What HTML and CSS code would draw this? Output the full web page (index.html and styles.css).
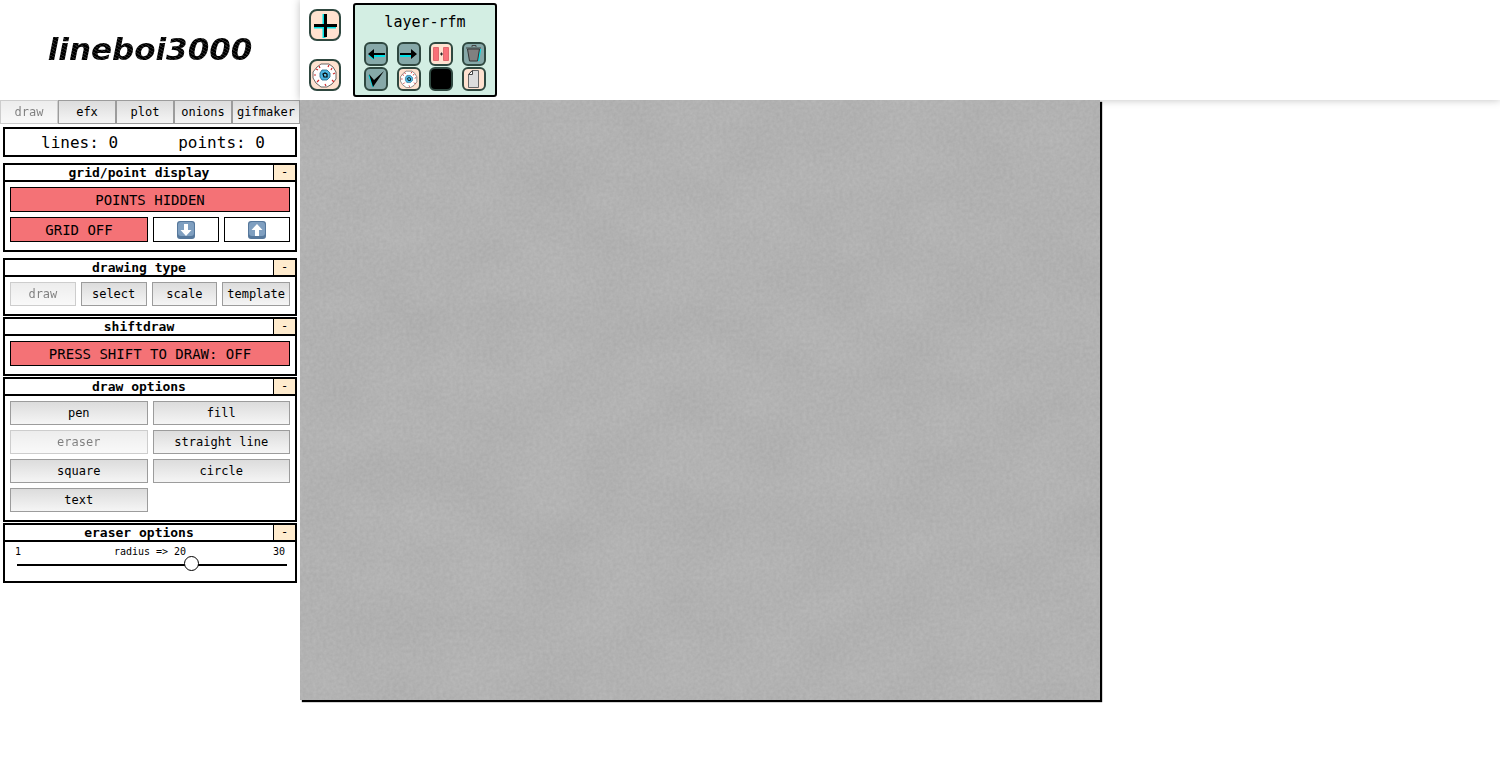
FILE: index.html
```html
<!DOCTYPE html>
<html lang="en">
<head>
<meta charset="utf-8">
<title>lineboi3000</title>
<link rel="stylesheet" href="styles.css">
</head>
<body>
<svg class="defs" aria-hidden="true">
  <symbol id="eye" viewBox="2 2 28 28">
    <path d="M12 5h8l4 3 3 5v7l-4 5-5 3h-6l-5-4-3-5v-6l4-5z" fill="#fff" stroke="#444" stroke-width=".8"/>
    <path d="M10 7l1 2M20 6l-1 2M26 14l-2 1M25 23l-2-2M17 27l-1-2M8 23l2-2M5 16h2M7 10l2 1M23 9l-1 2" fill="none" stroke="#d02a2a" stroke-width="1.2"/>
    <path d="M13 11h5l3 3v4l-3 3h-5l-2-3v-4z" fill="#4cb4e0" stroke="#1b6080" stroke-width=".8"/>
    <path d="M14 15l2-1 2 1v3h-3z" fill="#58c8f0" stroke="#000" stroke-width="1.2"/>
  </symbol>
</svg>
<div class="app">
  <aside class="sidebar">
    <h1 class="logo"><span>lineboi3000</span></h1>
    <nav class="tabs">
      <button class="btn" disabled>draw</button>
      <button class="btn">efx</button>
      <button class="btn">plot</button>
      <button class="btn">onions</button>
      <button class="btn">gifmaker</button>
    </nav>
    <div class="stats"><span>lines: 0</span><span>points: 0</span></div>

    <section class="panel panel-spaced">
      <header class="panel-head"><h2>grid/point display</h2><button class="fold" aria-label="collapse grid/point display">-</button></header>
      <div class="panel-body grid-tools">
        <button class="toggle wide">POINTS HIDDEN</button>
        <button class="toggle">GRID OFF</button>
        <button class="toggle plain" aria-label="smaller grid"><svg width="18" height="18" viewBox="0 0 18 18"><rect width="18" height="18" rx="3" fill="#55779b"/><rect x="1" y="1" width="16" height="14" rx="3" fill="#7f9fc0"/><path d="M7 3h4v6h3.500L9 15 3.500 9H7z" fill="#fff"/></svg></button>
        <button class="toggle plain" aria-label="larger grid"><svg width="18" height="18" viewBox="0 0 18 18"><rect width="18" height="18" rx="3" fill="#55779b"/><rect x="1" y="1" width="16" height="14" rx="3" fill="#7f9fc0"/><path d="M7 15h4V9h3.500L9 3 3.500 9H7z" fill="#fff"/></svg></button>
      </div>
    </section>

    <section class="panel">
      <header class="panel-head"><h2>drawing type</h2><button class="fold" aria-label="collapse drawing type">-</button></header>
      <div class="panel-body type-tools">
        <button class="btn" disabled>draw</button>
        <button class="btn">select</button>
        <button class="btn">scale</button>
        <button class="btn">template</button>
      </div>
    </section>

    <section class="panel">
      <header class="panel-head"><h2>shiftdraw</h2><button class="fold" aria-label="collapse shiftdraw">-</button></header>
      <div class="panel-body shift-tools">
        <button class="toggle">PRESS SHIFT TO DRAW: OFF</button>
      </div>
    </section>

    <section class="panel">
      <header class="panel-head"><h2>draw options</h2><button class="fold" aria-label="collapse draw options">-</button></header>
      <div class="panel-body draw-tools">
        <button class="btn">pen</button>
        <button class="btn">fill</button>
        <button class="btn" disabled>eraser</button>
        <button class="btn">straight line</button>
        <button class="btn">square</button>
        <button class="btn">circle</button>
        <button class="btn">text</button>
      </div>
    </section>

    <section class="panel">
      <header class="panel-head"><h2>eraser options</h2><button class="fold" aria-label="collapse eraser options">-</button></header>
      <div class="panel-body slider">
        <div class="slider-labels"><span>1</span><label for="radius">radius =&gt; 20</label><span class="slider-max">30</span></div>
        <input id="radius" type="range" min="1" max="30" value="20">
      </div>
    </section>
  </aside>

  <main class="workspace">
    <header class="layers">
      <div class="layer-actions">
        <button class="icon large" aria-label="add layer"><svg viewBox="2 2 28 28"><path d="M15 5v24M5 18h22" stroke="#00e0e6" stroke-width="3"/><path d="M16.500 5v23M5 16.500h23" stroke="#000" stroke-width="3"/></svg></button>
        <button class="icon large" aria-label="show all layers"><svg><use href="#eye"/></svg></button>
      </div>
      <article class="layer">
        <h3>layer-rfm</h3>
        <div class="layer-tools">
          <button class="icon teal" aria-label="move left"><svg viewBox="2 2 20 20"><path d="M8 14h13M5 13l5 4" stroke="#00e0e6" stroke-width="2"/><path d="M4 12l6-5v4h11v2H10v4z"/></svg></button>
          <button class="icon teal" aria-label="move right"><svg viewBox="2 2 20 20"><path d="M3 14h12" stroke="#00e0e6" stroke-width="2"/><path d="M20 12l-6-5v4H3v2h11v4z"/></svg></button>
          <button class="icon" aria-label="merge"><svg viewBox="2 2 20 20"><path d="M4.500 5.500h5v13h-5zM14.500 5.500h5v13h-5z" fill="#f97078" stroke="#e0686c" stroke-width="1"/><path d="M11 12h3M12.500 10.500v3" stroke="#222"/></svg></button>
          <button class="icon teal" aria-label="delete"><svg viewBox="2 2 20 20"><path d="M18.500 7l-2 12" fill="none" stroke="#00e0e6" stroke-width="1.500"/><path d="M5.500 7h12l-2 12h-8z" fill="#808080" stroke="#333"/><path d="M4 6h15M10 5V3.500h4V5" fill="none" stroke="#444" stroke-width="1"/></svg></button>
          <button class="icon teal" aria-label="select layer"><svg viewBox="2 2 20 20"><path d="M5 8l4 12" fill="none" stroke="#00d8de" stroke-width="1.500"/><path d="M5 7l5 6L20 4 9 20z"/></svg></button>
          <button class="icon" aria-label="show layer"><svg><use href="#eye"/></svg></button>
          <button class="icon black" aria-label="layer color"></button>
          <button class="icon" aria-label="duplicate"><svg viewBox="2 2 20 20"><path d="M10 3.500h6.500v17h-10V7.500z" fill="#ddd" stroke="#666"/><path d="M10.500 3.500v4h-4z" fill="#fff" stroke="#444"/></svg></button>
        </div>
      </article>
    </header>
    <svg class="paper" width="800" height="600" role="img" aria-label="drawing area">
      <filter id="grain" x="0" y="0" width="100%" height="100%" color-interpolation-filters="sRGB">
        <feTurbulence type="fractalNoise" baseFrequency=".3" numOctaves="2" seed="4" result="fine"/>
        <feColorMatrix in="fine" values=".06 0 0 0 .324  .06 0 0 0 .324  .06 0 0 0 .324  0 0 0 0 1" result="fineGray"/>
        <feTurbulence type="fractalNoise" baseFrequency=".014 .02" numOctaves="3" seed="9" result="soft"/>
        <feColorMatrix in="soft" values=".03 0 0 0 .328  .03 0 0 0 .328  .03 0 0 0 .328  0 0 0 0 1" result="softGray"/>
        <feComposite in="fineGray" in2="softGray" operator="arithmetic" k2="1" k3="1"/>
      </filter>
      <rect width="100%" height="100%" filter="url(#grain)"/>
    </svg>
  </main>
</div>
</body>
</html>
```
FILE: styles.css
```css
* { box-sizing: border-box; }
body {
  margin: 0;
  background: #fff;
  color: #000;
  font-family: "DejaVu Sans Mono", "Liberation Mono", monospace;
  font-size: 12px;
}
button { font: inherit; color: inherit; margin: 0; padding: 0; }
h1, h2, h3 { margin: 0; }
.defs { position: absolute; width: 0; height: 0; }
.app { display: flex; min-height: 100vh; }

.sidebar { flex: 0 0 300px; display: flex; flex-direction: column; }
.logo {
  height: 100px;
  padding-bottom: 2px;
  display: flex;
  align-items: center;
  justify-content: center;
  font: italic bold 31px "DejaVu Sans", sans-serif;
}
.logo span {
  color: transparent;
  background: repeating-linear-gradient(30deg, #000 0 2px, #242424 2px 3px);
  background-clip: text;
  -webkit-background-clip: text;
}
.tabs { display: grid; grid-template-columns: repeat(4, 58fr) 68fr; margin-bottom: 3px; }
.btn {
  height: 24px;
  border: 1px solid #9c9c9c;
  background: linear-gradient(#dcdcdc, #f5f5f5);
  text-align: center;
  white-space: nowrap;
}
.btn:disabled { opacity: .5; }

.stats {
  display: flex;
  justify-content: space-around;
  align-items: center;
  height: 30px;
  margin: 0 3px 6px;
  padding-left: 6px;
  border: 2px solid #000;
  font-size: 16px;
}
.panel { margin: 0 3px 1px; border: 2px solid #000; }
.panel-spaced { margin-bottom: 6px; }
.panel-head { display: flex; height: 17px; border-bottom: 2px solid #000; }
.panel-head h2 { flex: 1; font-size: 13px; line-height: 15px; text-align: center; }
.fold {
  width: 22px;
  border: 0;
  border-left: 1px solid #000;
  background: #ffebcd;
  line-height: 15px;
}
.panel-body { display: grid; gap: 5px; padding: 5px 5px 8px; }
.grid-tools { grid-template-columns: 138fr 66fr 66fr; }
.wide { grid-column: 1 / -1; }
.type-tools { grid-template-columns: repeat(3, 66fr) 68fr; }
.draw-tools { grid-template-columns: 1fr 1fr; }
.toggle {
  display: flex;
  align-items: center;
  justify-content: center;
  height: 25px;
  border: 1px solid #000;
  background: #f47276;
  font-size: 14px;
}
.plain { background: #fff; }

.slider { gap: 0; padding: 4px 8px 10px 10px; }
.slider-labels {
  display: grid;
  grid-template-columns: 1fr auto 1fr;
  padding-right: 2px;
  font-size: 10px;
  line-height: 12px;
}
.slider-max { text-align: right; }
.slider input {
  appearance: none;
  width: 100%;
  height: 13px;
  margin: 0;
  padding: 0 0 0 2px;
  background: transparent;
}
.slider input::-webkit-slider-runnable-track { height: 2px; background: #000; }
.slider input::-webkit-slider-thumb {
  appearance: none;
  width: 15px;
  height: 15px;
  margin-top: -8px;
  border: 1px solid #000;
  border-radius: 50%;
  background: #fff;
}

.workspace { flex: 1; min-width: 0; }
.layers {
  display: flex;
  gap: 12px;
  height: 100px;
  padding: 3px 9px;
  box-shadow: 0 0 8px rgba(0, 0, 0, .25);
}
.layer-actions { display: flex; flex-direction: column; justify-content: space-between; padding: 6px 0; }
.icon {
  display: flex;
  width: 24px;
  height: 24px;
  border: 2px solid #2f4840;
  border-radius: 6px;
  background: #ffe2d0;
}
.icon svg { width: 100%; height: 100%; }
.large { width: 32px; height: 32px; border-radius: 8px; }
.teal { background: #86a8a8; }
.black { background: #000; }
.layer {
  display: flex;
  flex-direction: column;
  justify-content: space-between;
  width: 144px;
  padding: 7px 9px 4px;
  border: 2px solid #000;
  border-radius: 3px;
  background: #d3eee3;
}
.layer h3 { font-size: 15px; font-weight: normal; line-height: 20px; text-align: center; }
.layer-tools { display: grid; grid-template-columns: repeat(4, 24px); justify-content: space-between; row-gap: 1px; }
.paper { position: relative; display: block; background: #b0b0b0; box-shadow: 2px 2px 1px #000; }
```
